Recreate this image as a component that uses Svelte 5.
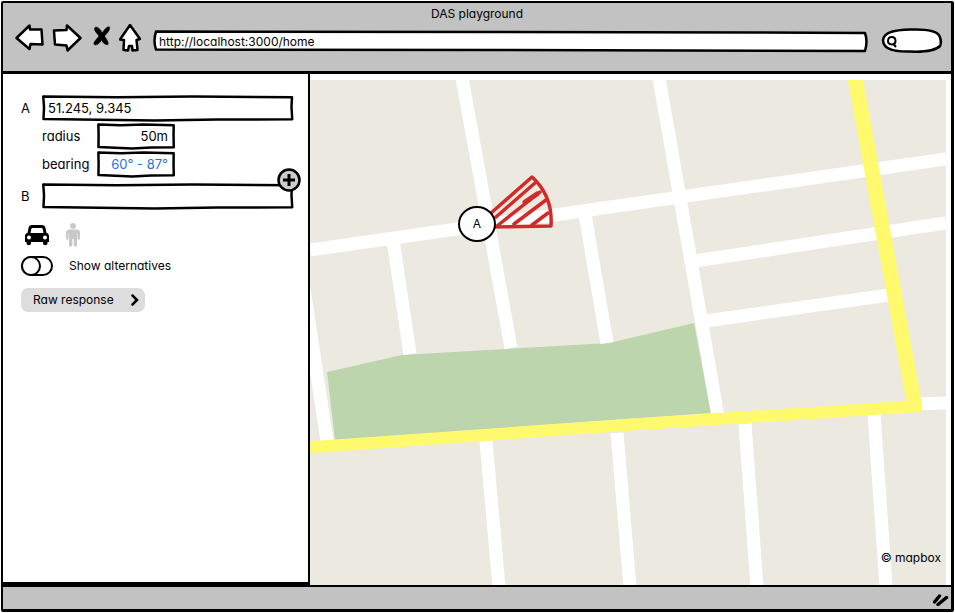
<script>
  let url = $state('http://localhost:3000/home');
  let query = $state('');
  let start = $state('51.245, 9.345');
  let radius = $state('50m');
  let bearing = $state('60° - 87°');
  let end = $state('');
  let mode = $state('car');
  let alternatives = $state(false);

  const streets = [
    'M296 236L327 441',
    'M310 250L946 159',
    'M462 78L511 348',
    'M659 78L718 416',
    'M393 240L410 354',
    'M585 214L607 343',
    'M695 261L946 223',
    'M706 321L889 295',
    'M915 404L946 403',
    'M486 441L499 587',
    'M617 433L630 587',
    'M745 424L757 587',
    'M874 414L886 587'
  ];
</script>

{#snippet box()}
  <svg class="box" viewBox="0 0 100 26" preserveAspectRatio="none" aria-hidden="true">
    <path d="M.5 1.500L30 2.200L60 1.500L99.600 2.300L99.400 12L99.700 24.300L70 24.500L45 25.400L.6 24L.8 12Z" />
  </svg>
{/snippet}

<div class="window">
  <header>
    <h1>DAS playground</h1>
    <div class="toolbar">
      <nav>
        <button class="back" aria-label="Back">
          <svg viewBox="15 22 30 30"><path d="M16.500 36L29.500 23.500L30 27.500L41.500 27.500L42.500 42.500L30.500 42L29.500 47Z" /></svg>
        </button>
        <button class="forward" aria-label="Forward">
          <svg viewBox="51 22 32 30"><path d="M54 28.500L66.500 28L67 23.500L80.500 36L67.500 48.500L66.500 43.500L55 42.500L54.500 36Z" /></svg>
        </button>
        <button class="stop" aria-label="Stop">
          <svg viewBox="89 22 24 30"><path class="solid" d="M94.500 26C96.500 23.500 100 26.500 102.300 31C104.500 26.500 108 24 109.500 25C110.500 28 106.500 32 104.500 34C106.500 37 109 40.500 108 42.500C105.500 43.500 103 41 101.500 38C99.500 41.500 96.500 44 94 42.500C93 40 97 37 99 34C97 31.500 94 28.500 94.500 26Z" /></svg>
        </button>
        <button class="home" aria-label="Home">
          <svg viewBox="119 22 22 30"><path d="M130 23L140 37L136.500 38L137.500 48L132.500 48.500L132 44L129 44L128 48.500L123.500 48L124 38L120 37.500Z" /></svg>
        </button>
      </nav>
      <div class="field address">
        <svg class="box" viewBox="0 0 714 20" preserveAspectRatio="none" aria-hidden="true">
          <path d="M3 .5L350 1L600 1.500L711 2Q714 10 711 20L350 19L3 18.500Q0 10 3 .5Z" />
        </svg>
        <input aria-label="Address" bind:value={url} />
      </div>
      <div class="field search">
        <svg viewBox="0 0 63 26" aria-hidden="true">
          <path d="M3 14C4 7 11 4 31 3.500C48 3 57 5 59.500 10Q62 16 60 20C55 25 42 26 30 25.500C16 26 3 24 3 14Z" />
          <path class="lens" d="M8 15C8 9.500 15.500 9.500 15.500 15C15.500 19.500 8 19.500 8 15M13.500 18L16 21" />
        </svg>
        <input aria-label="Search" bind:value={query} />
      </div>
    </div>
  </header>

  <main>
    <form class="sidebar" onsubmit={(e) => e.preventDefault()}>
      <div class="row">
        <label for="start">A</label>
        <div class="field wide">{@render box()}<input id="start" bind:value={start} /></div>
      </div>
      <div class="row detail">
        <label for="radius">radius</label>
        <div class="field">{@render box()}<input id="radius" bind:value={radius} /></div>
      </div>
      <div class="row detail">
        <label for="bearing">bearing</label>
        <div class="field">{@render box()}<input id="bearing" class="link" bind:value={bearing} /></div>
      </div>
      <div class="row last">
        <label for="end">B</label>
        <div class="field wide">
          {@render box()}<input id="end" bind:value={end} />
          <button type="button" class="add" aria-label="Add waypoint">
            <svg viewBox="0 0 24 24"><circle cx="12" cy="12" r="10.500" /><path d="M12 6V18M6 12H18" /></svg>
          </button>
        </div>
      </div>

      <div class="modes">
        <button type="button" class:active={mode === 'car'} aria-label="Car" onclick={() => (mode = 'car')}>
          <svg width="32" height="24" viewBox="21 222 32 24">
            <path fill-rule="evenodd" d="M32 224H42C44 224 45 225 45.500 227L46.500 232C48 232 49 233.500 49 235V241H47.500V242C47.500 245 43 245 43 242V241H31V242C31 245 26.500 245 26.500 242V241H25V235C25 233.500 26 232 27.500 232L28.500 227C29 225 30 224 32 224ZM32.500 227C31.700 227 31.500 227.500 31.300 228L30.500 232H43.500L42.700 228C42.500 227.500 42.300 227 41.500 227ZM29 234.500A2 2 0 1 0 29 238.500A2 2 0 1 0 29 234.500ZM45 234.500A2 2 0 1 0 45 238.500A2 2 0 1 0 45 234.500Z" />
          </svg>
        </button>
        <button type="button" class:active={mode === 'walk'} aria-label="Walk" onclick={() => (mode = 'walk')}>
          <svg width="16" height="24" viewBox="65 222 16 24">
            <circle cx="73" cy="225" r="2.900" />
            <path d="M69 228.500H77Q80 228.500 80 232V238Q79 239.500 77.500 238V232.500H77V245Q75.500 246 73.700 245V238H72.300V245Q70.500 246 69 245V232.500H68.500V238Q67 239.500 66 238V232Q66 228.500 69 228.500Z" />
          </svg>
        </button>
      </div>

      <label class="toggle">
        <span class="switch" class:on={alternatives}>
          <input type="checkbox" bind:checked={alternatives} />
          <svg viewBox="0 0 32 20" aria-hidden="true"><rect x="1" y="1" width="30" height="18" rx="9" /><circle cx="10" cy="10" r="9" /></svg>
        </span>
        Show alternatives
      </label>

      <button type="button" class="raw">
        Raw response
        <svg width="8" height="12" viewBox="0 0 8 12"><path d="M1.500 1.500L6 6L1.500 10.500" /></svg>
      </button>
    </form>

    <section class="map" aria-label="Map">
      <svg viewBox="310 80 636 505" preserveAspectRatio="xMidYMid slice">
        <path class="park" d="M327 372L402 355L609 343L694 323L711 413L335 440Z" />
        {#each streets as d}
          <path class="street" {d} />
        {/each}
        <path class="major" d="M300 448L640 424L922 406" />
        <path class="major tall" d="M855 78L915 408" />
        <g class="view">
          <path d="M491 213L532 177Q553 196 551 226L494 227" />
          <path d="M496 217L535 183M497 226L540 192M514 224L546 200M532 225L548 213" />
          <path class="thick" d="M525 202L537 194" />
        </g>
        <ellipse class="pin" cx="477" cy="224" rx="18" ry="17" />
        <text x="477" y="228">A</text>
      </svg>
      <small>© mapbox</small>
    </section>
  </main>

  <footer>
    <svg width="18" height="16" viewBox="0 0 18 16" aria-hidden="true"><path d="M1.500 12L6.500 6M5 14.500L13.500 7.500" /></svg>
  </footer>
</div>

<style>
  :global(body) {
    margin: 0;
    background: #fff;
  }
  .window {
    box-sizing: border-box;
    display: flex;
    flex-direction: column;
    min-height: calc(100vh - 2px);
    margin: 1px;
    border: solid #000;
    border-width: 2px 3px 3px 2px;
    border-radius: 2px;
    font: 13px/20px Inter, 'Noto Sans', sans-serif;
    font-feature-settings: 'cv11';
    color: #000;
  }
  button,
  input {
    font: inherit;
    font-feature-settings: inherit;
    color: inherit;
    margin: 0;
    padding: 0;
    border: 0;
    background: none;
  }
  svg {
    display: block;
  }
  header {
    background: #c2c2c2;
    border-bottom: 3px solid #000;
    padding-bottom: 18px;
  }
  h1 {
    margin: 0;
    padding-top: 1px;
    font-size: 12px;
    line-height: 20px;
    font-weight: 400;
    text-align: center;
  }
  .toolbar {
    display: flex;
    align-items: center;
    gap: 12px;
    padding: 0 8px 0 12px;
    height: 29px;
  }
  nav {
    display: flex;
    gap: 6px;
  }
  nav svg {
    width: 100%;
    height: 30px;
  }
  nav path {
    fill: #fff;
    stroke: #000;
    stroke-width: 2.500;
    stroke-linejoin: round;
  }
  nav .solid {
    fill: #000;
    stroke-width: 0.500;
  }
  .back {
    width: 30px;
  }
  .forward {
    width: 32px;
  }
  .stop {
    width: 24px;
  }
  .home {
    width: 22px;
  }
  .field {
    position: relative;
    height: 26px;
  }
  .field input {
    position: relative;
    box-sizing: border-box;
    width: 100%;
    height: 100%;
    padding: 0 6px;
    outline: none;
  }
  .field > svg {
    position: absolute;
    inset: 0;
    width: 100%;
    height: 100%;
    overflow: visible;
    fill: #fff;
    stroke: #000;
    stroke-width: 2.500;
    stroke-linejoin: round;
  }
  .box path {
    vector-effect: non-scaling-stroke;
  }
  .address {
    flex: 1;
    align-self: flex-end;
    height: 20px;
    margin-bottom: 2px;
    font-size: 12px;
  }
  .search {
    width: 63px;
  }
  .search input {
    padding-left: 20px;
  }
  .field .lens {
    fill: none;
    stroke-width: 2;
  }
  main {
    flex: 1;
    display: flex;
    background: #fff;
  }
  .sidebar {
    box-sizing: border-box;
    flex: 0 0 307px;
    padding: 21px 15px 21px 18px;
    border: solid #000;
    border-width: 0 2px 3px 0;
  }
  .row {
    display: flex;
    align-items: center;
    margin-bottom: 2px;
  }
  .row label {
    width: 21px;
  }
  .wide {
    flex: 1;
  }
  .detail {
    padding-left: 21px;
  }
  .detail label {
    width: 56px;
  }
  .detail .field {
    width: 76px;
  }
  .detail input {
    text-align: right;
  }
  .detail .link {
    color: #2a6fe0;
  }
  .last {
    margin-top: 6px;
  }
  .add {
    position: absolute;
    top: -15px;
    right: -8px;
    width: 24px;
    height: 24px;
  }
  .add svg {
    fill: #ccc;
    stroke: #000;
    stroke-width: 2.500;
  }
  .add path {
    stroke-width: 3;
  }
  .modes {
    display: flex;
    gap: 12px;
    margin-top: 14px;
    fill: #c8c8c8;
  }
  .modes .active {
    fill: #000;
  }
  .toggle {
    display: flex;
    gap: 16px;
    margin: 9px 0 12px;
    font-size: 12px;
  }
  .switch {
    position: relative;
    width: 32px;
    height: 20px;
  }
  .switch input {
    appearance: none;
    position: absolute;
    inset: 0;
  }
  .switch svg {
    fill: #fff;
    stroke: #000;
    stroke-width: 2;
  }
  .on circle {
    transform: translateX(12px);
  }
  .raw {
    display: flex;
    align-items: center;
    gap: 17px;
    padding: 2px 6px 2px 12px;
    border-radius: 7px;
    background: #ddd;
    font-size: 12px;
  }
  .raw path {
    fill: none;
    stroke: #000;
    stroke-width: 2.500;
    stroke-linecap: round;
  }
  .map {
    position: relative;
    flex: 1;
    margin: 6px 5px 0 0;
    overflow: hidden;
    background: #ece9e1;
  }
  .map svg {
    position: absolute;
    inset: 0;
    width: 100%;
    height: 100%;
  }
  .park {
    fill: #bcd5ad;
  }
  .street,
  .major {
    fill: none;
    stroke: #fff;
    stroke-width: 13;
  }
  .major {
    stroke: #fff96d;
    stroke-width: 12;
  }
  .tall {
    stroke-width: 15;
  }
  .view path {
    fill: none;
    stroke: #d12a2a;
    stroke-width: 3.500;
    stroke-linecap: round;
    stroke-linejoin: round;
  }
  .view .thick {
    stroke-width: 5;
  }
  .pin {
    fill: #fff;
    stroke: #000;
    stroke-width: 2;
  }
  text {
    font-size: 12px;
    text-anchor: middle;
  }
  small {
    position: absolute;
    right: 5px;
    bottom: 17px;
    font-size: 12px;
  }
  footer {
    display: flex;
    justify-content: flex-end;
    align-items: center;
    height: 22px;
    background: #c2c2c2;
    border-top: 2px solid #000;
  }
  footer path {
    stroke: #000;
    stroke-width: 3.500;
    stroke-linecap: round;
  }
</style>
